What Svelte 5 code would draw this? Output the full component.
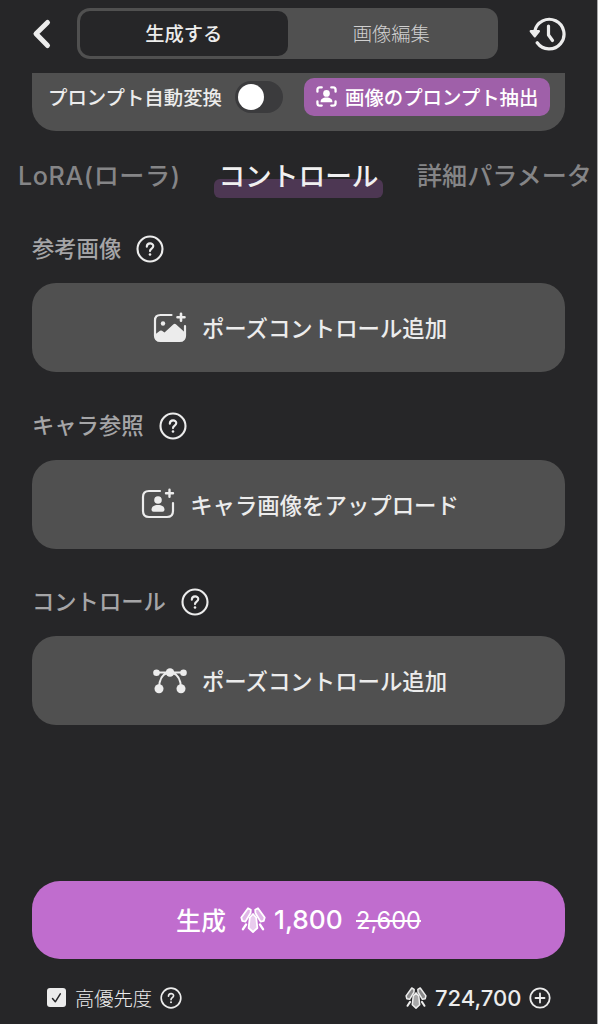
<script lang="ts">
  let mode = $state('generate');
  let autoConvert = $state(false);
  let activeTab = $state('control');
  let highPriority = $state(true);

  const modes = [
    { id: 'generate', label: '生成する' },
    { id: 'edit', label: '画像編集' }
  ];

  const tabs = [
    { id: 'lora', label: 'LoRA(ローラ)' },
    { id: 'control', label: 'コントロール' },
    { id: 'detail', label: '詳細パラメータ' }
  ];

  const sections = [
    { title: '参考画像', action: 'ポーズコントロール追加', icon: 'image' },
    { title: 'キャラ参照', action: 'キャラ画像をアップロード', icon: 'person' },
    { title: 'コントロール', action: 'ポーズコントロール追加', icon: 'pose' }
  ];
</script>

{#snippet help()}
  <svg class="help" viewBox="0 0 28 28" fill="none" stroke="currentColor" stroke-width="2.1" stroke-linecap="round">
    <circle cx="14" cy="14" r="12.5" />
    <path d="M10.8 11.8c0-4.5 6.5-4.3 6.5-.7 0 2.5-3.3 2.5-3.3 5" />
    <circle cx="14" cy="19.5" r="1.3" fill="currentColor" stroke="none" />
  </svg>
{/snippet}

{#snippet gems()}
  <svg class="gems" viewBox="0 0 26 26" fill="none" stroke="currentColor" stroke-width="1.8" stroke-linejoin="round" stroke-linecap="round">
    <path d="M8 1.2 10.8 2.8 10.6 6 5.4 14.6 2.2 13.8 1.3 10.5Z" fill="currentColor" fill-opacity=".5" />
    <path d="M18 1.2 15.2 2.8 15.4 6 20.6 14.6 23.8 13.8 24.7 10.5Z" fill="currentColor" fill-opacity=".5" />
    <path d="M13 7 16.2 10.5 17.4 21 13 25 8.6 21 9.8 10.5Z" fill="currentColor" fill-opacity=".65" />
    <path d="M6 17.6 3 22.2M20 17.6 23 22.2" stroke-width="2.4" />
  </svg>
{/snippet}

<div class="app">
  <header>
    <button class="icon-button back" aria-label="戻る">
      <svg width="20" height="32" viewBox="0 0 20 32" fill="none" stroke="currentColor" stroke-width="5" stroke-linecap="round" stroke-linejoin="round">
        <path d="M15.5 4.5 4 15.8l11.500 11.700" />
      </svg>
    </button>
    <div class="modes">
      {#each modes as m}
        <button class:selected={mode === m.id} onclick={() => (mode = m.id)}>{m.label}</button>
      {/each}
    </div>
    <button class="icon-button history" aria-label="履歴">
      <svg width="38" height="36" viewBox="0 0 38 36" fill="none" stroke="currentColor" stroke-width="3.2" stroke-linecap="round" stroke-linejoin="round">
        <path d="M6.7 15.2a14.8 14.8 0 1 1 2.5 11.6" />
        <path d="M2.800 15.300h8L6.800 20.300Z" fill="currentColor" stroke-width="2.4" />
        <path d="M20.500 10v9l4 5.500" />
      </svg>
    </button>
  </header>

  <div class="prompt-panel">
    <span class="prompt-label">プロンプト自動変換</span>
    <button
      class="switch"
      class:on={autoConvert}
      role="switch"
      aria-checked={autoConvert}
      aria-label="プロンプト自動変換"
      onclick={() => (autoConvert = !autoConvert)}
    >
      <span class="knob"></span>
    </button>
    <button class="extract">
      <svg width="21" height="21" viewBox="0 0 22 22" fill="none" stroke="currentColor" stroke-width="2.4" stroke-linecap="round">
        <path d="M1.5 6V4q0-2.5 2.5-2.5h2M16 1.5h2q2.5 0 2.5 2.5v2M20.5 16v2q0 2.5-2.5 2.5h-2M6 20.5H4Q1.5 20.5 1.5 18v-2" />
        <circle cx="11" cy="7.8" r="3.5" fill="currentColor" stroke="none" />
        <path d="M4.8 17c0-3.5 2.200-5 6.200-5s6.200 1.500 6.200 5Z" fill="currentColor" stroke="none" />
      </svg>
      <span>画像のプロンプト抽出</span>
    </button>
  </div>

  <nav>
    {#each tabs as tab}
      <button class="tab {tab.id}" class:active={activeTab === tab.id} onclick={() => (activeTab = tab.id)}>
        {tab.label}
      </button>
    {/each}
  </nav>

  <main>
    {#each sections as section}
      <section>
        <h2>{section.title}{@render help()}</h2>
        <button class="add">
          {#if section.icon === 'image'}
            <svg width="34" height="32" viewBox="0 0 34 32" fill="none" stroke="currentColor" stroke-width="2.2" stroke-linecap="round">
              <path d="M18.5 3H7.5Q2 3 2 8.500v15Q2 29 7.500 29h19q5.500 0 5.500-5.500V14" />
              <circle cx="10" cy="11.500" r="2.200" fill="currentColor" stroke="none" />
              <path d="M2 22.500 7 18.800q1-.7 2 0l2.500 1.700L20.500 12.300q1.200-1 2.400 0L32 20.500v3q0 5.500-5.500 5.500h-19Q2 29 2 23.500Z" fill="currentColor" stroke="none" />
              <path d="M28 1.800v7M24.500 5.300h7" stroke-width="2.600" />
            </svg>
          {:else if section.icon === 'person'}
            <svg width="34" height="32" viewBox="0 0 34 32" fill="none" stroke="currentColor" stroke-width="2.2" stroke-linecap="round">
              <path d="M19 3H8Q2 3 2 9v14q0 6 6 6h18q6 0 6-6v-8" />
              <circle cx="17" cy="12" r="3.8" fill="currentColor" stroke="none" />
              <path d="M12.5 23.8q-2 0-2-2c0-3.300 2.500-4.800 6.500-4.800s6.500 1.500 6.500 4.800q0 2-2 2Z" fill="currentColor" stroke="none" />
              <path d="M28.5 1.8v7M25 5.300h7" stroke-width="2.4" />
            </svg>
          {:else}
            <svg width="34" height="26" viewBox="0 0 34 26" fill="none" stroke="currentColor" stroke-width="2">
              <path d="M3 4.500h28M14 5C8.500 7 6.200 12 6 20M20 5c5.500 2 7.800 7 8 15" />
              <g fill="currentColor" stroke="none">
                <circle cx="3.500" cy="4.700" r="3.300" />
                <circle cx="30.500" cy="4.700" r="3.300" />
                <circle cx="17" cy="4.500" r="4.300" />
                <circle cx="6" cy="20.800" r="4.500" />
                <circle cx="28" cy="20.800" r="4.500" />
              </g>
            </svg>
          {/if}
          <span>{section.action}</span>
        </button>
      </section>
    {/each}
  </main>

  <footer>
    <button class="generate">
      <span class="verb">生成</span>
      {@render gems()}
      <span class="price">1,800</span>
      <s>2,600</s>
    </button>
    <div class="status">
      <button class="check" role="checkbox" aria-checked={highPriority} aria-label="高優先度" onclick={() => (highPriority = !highPriority)}>
        {#if highPriority}
          <svg width="19" height="19" viewBox="0 0 19 19" fill="none" stroke="#262628" stroke-width="1.5" stroke-linecap="round" stroke-linejoin="round">
            <path d="m5.500 10.500 2.800 3.300 5-8" />
          </svg>
        {/if}
      </button>
      <span class="priority">高優先度</span>
      {@render help()}
      <div class="balance">
        {@render gems()}
        <span>724,700</span>
        <svg width="22" height="22" viewBox="0 0 22 22" fill="none" stroke="currentColor" stroke-width="1.8" stroke-linecap="round">
          <circle cx="11" cy="11" r="9.7" />
          <path d="M11 6.500v9M6.500 11h9" />
        </svg>
      </div>
    </div>
  </footer>
</div>

<style>
  :global(body) {
    margin: 0;
    background: #262628;
  }

  .app {
    box-sizing: border-box;
    width: 598px;
    height: 1024px;
    display: flex;
    flex-direction: column;
    overflow: hidden;
    background: #262628;
    border-right: 1px solid #a9a9aa;
    color: #ececec;
    font-family: Inter, 'Noto Sans CJK JP', sans-serif;
  }

  button {
    margin: 0;
    padding: 0;
    border: 0;
    background: none;
    color: inherit;
    font: inherit;
    white-space: nowrap;
  }

  svg {
    display: block;
    flex: none;
  }

  header {
    display: flex;
    flex: none;
    height: 73px;
    box-sizing: border-box;
    padding: 8px 0 0 32px;
  }

  .icon-button {
    display: flex;
    align-items: center;
    height: 51px;
  }

  .back {
    width: 45px;
  }

  .history {
    margin-left: 30px;
  }

  .modes {
    display: flex;
    box-sizing: border-box;
    width: 421px;
    height: 51px;
    padding: 3px;
    border-radius: 13px;
    background: #505050;
    font-size: 19.3px;
  }

  .modes button {
    flex: 1;
    height: 45px;
    padding-bottom: 1px;
    border-radius: 10px;
    color: #d0d0d0;
    font-weight: 300;
  }

  .modes .selected {
    background: #262628;
    color: #ececec;
    font-weight: 500;
  }

  .prompt-panel {
    display: flex;
    flex: none;
    align-items: center;
    box-sizing: border-box;
    width: 533px;
    height: 58px;
    margin-left: 32px;
    padding: 0 15px 11px 16px;
    border-radius: 0 0 24px 24px;
    background: #505050;
    font-size: 19.4px;
    font-weight: 500;
  }

  .prompt-label {
    width: 187px;
    white-space: nowrap;
  }

  .switch {
    width: 48px;
    height: 32px;
    padding-left: 3px;
    border-radius: 16px;
    background: #3b3b3d;
  }

  .knob {
    display: block;
    width: 26px;
    height: 26px;
    border-radius: 50%;
    background: #fff;
  }

  .switch.on {
    padding-left: 19px;
    background: #9f60a9;
  }

  .extract {
    display: flex;
    align-items: center;
    gap: 8px;
    width: 246px;
    height: 38px;
    box-sizing: border-box;
    margin-left: auto;
    padding-left: 12px;
    border-radius: 10px;
    background: #9f60a9;
    color: #fff;
  }

  nav {
    display: flex;
    flex: none;
    align-items: center;
    height: 90px;
    padding-left: 18px;
    font-size: 25.1px;
    font-weight: 500;
  }

  .tab {
    position: relative;
    z-index: 0;
    height: 44px;
    padding-bottom: 4px;
    color: #858587;
    text-align: left;
  }

  .lora {
    width: 196px;
    letter-spacing: 0.6px;
  }

  .control {
    width: 169px;
    text-align: center;
  }

  .detail {
    margin-left: 34px;
  }

  .tab.active {
    color: #f0f0f0;
    font-size: 26.7px;
  }

  .tab.active::before {
    content: '';
    position: absolute;
    inset: auto 0 0;
    z-index: -1;
    height: 19px;
    border-radius: 6px;
    background: #4d3753;
  }

  main {
    display: flex;
    flex-direction: column;
    gap: 27.7px;
    padding: 0 32px;
  }

  section {
    height: 149px;
  }

  h2 {
    display: flex;
    align-items: center;
    gap: 15px;
    height: 56px;
    margin: 0 0 6px;
    color: #a5a5a7;
    font-size: 22.3px;
    font-weight: 500;
    line-height: 30px;
  }

  .help {
    width: 28px;
    height: 28px;
    color: #ececec;
  }

  .add {
    display: flex;
    align-items: center;
    justify-content: center;
    gap: 15px;
    width: 533px;
    height: 89px;
    box-sizing: border-box;
    padding-left: 3px;
    border-radius: 24px;
    background: #505050;
    font-size: 22.4px;
    font-weight: 500;
  }

  .add span {
    padding-bottom: 1px;
  }

  footer {
    margin-top: auto;
    padding: 0 32px;
  }

  .generate {
    display: flex;
    align-items: center;
    width: 533px;
    height: 78px;
    box-sizing: border-box;
    padding-left: 144px;
    padding-bottom: 1px;
    border-radius: 28px;
    background: #c06dce;
    color: #fff;
    font-weight: 500;
  }

  .verb {
    width: 64px;
    padding-bottom: 1px;
    font-size: 25px;
    text-align: left;
  }

  .gems {
    width: 26px;
    height: 26px;
  }

  .price {
    width: 82px;
    margin-left: 8px;
    font-size: 26.3px;
    text-align: left;
  }

  s {
    padding-top: 2px;
    font-size: 23.6px;
    font-weight: 400;
    text-decoration-thickness: 2px;
  }

  .status {
    display: flex;
    align-items: center;
    height: 65px;
    padding: 12px 14px 0 15px;
    box-sizing: border-box;
  }

  .check {
    width: 19px;
    height: 19px;
    border-radius: 3px;
    background: #ececec;
  }

  .priority {
    width: 85px;
    margin-left: 9px;
    font-size: 19.3px;
    font-weight: 300;
    white-space: nowrap;
  }

  .status .help {
    width: 22px;
    height: 22px;
  }

  .balance {
    display: flex;
    align-items: center;
    margin-left: auto;
    font-size: 22px;
    font-weight: 500;
  }

  .balance .gems {
    width: 22px;
    height: 22px;
  }

  .balance span {
    width: 86px;
    margin: 0 8px;
  }
</style>
